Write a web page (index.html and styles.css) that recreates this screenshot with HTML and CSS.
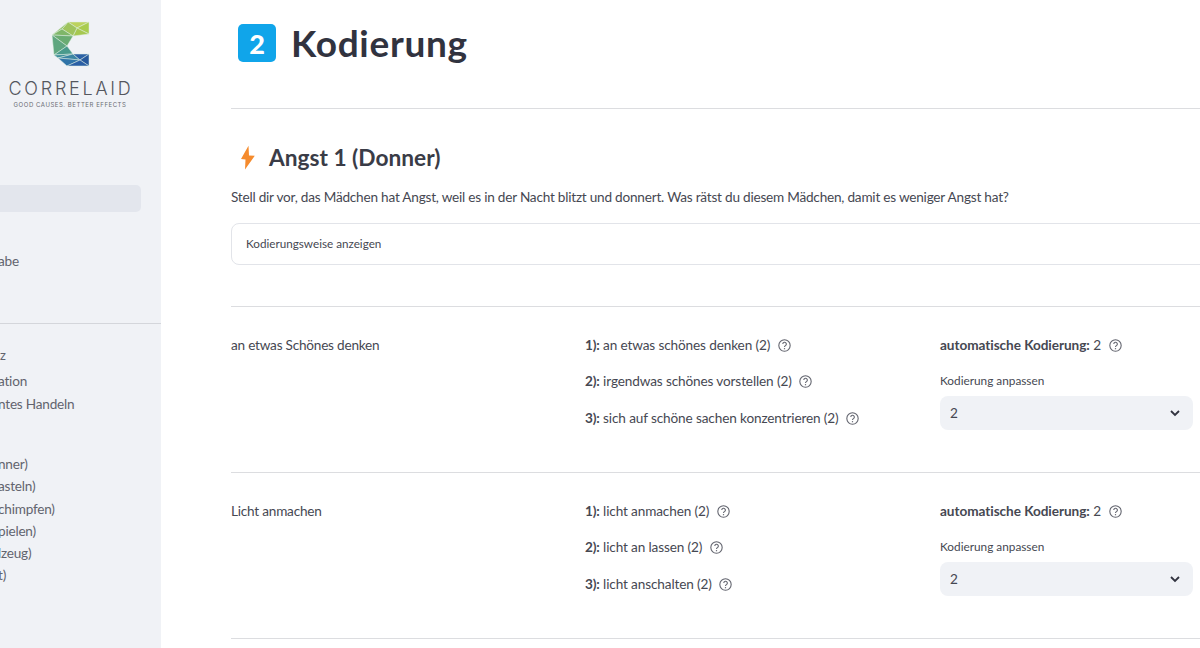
FILE: index.html
```html
<!DOCTYPE html>
<html lang="de">
<head>
<meta charset="utf-8">
<title>Kodierung</title>
<link rel="stylesheet" href="styles.css">
</head>
<body>
<div class="app">
  <aside class="sidebar">
    <div class="brand">
      <svg class="logo" width="40" height="48" viewBox="0 0 40 48">
        <g stroke="#dfeee0" stroke-width=".5" stroke-linejoin="round">
          <polygon points="18,2 39,2 27,8" fill="#bcd25e"/>
          <polygon points="39,2 39,14 27,8" fill="#a9cc4e"/>
          <polygon points="27,8 39,14 23,16" fill="#a6c850"/>
          <polygon points="18,2 27,8 23,16 12,9" fill="#9fc45e"/>
          <polygon points="18,2 12,9 2,15" fill="#8dbd62"/>
          <polygon points="2,15 12,9 23,16" fill="#7fb669"/>
          <polygon points="2,15 23,16 17,26" fill="#6aac72"/>
          <polygon points="2,15 17,26 4,35" fill="#5fa67f"/>
          <polygon points="4,35 17,26 23,34" fill="#4a9a8c"/>
          <polygon points="4,35 23,34 8,38" fill="#3f8f9a"/>
          <polygon points="8,38 23,34 30,40" fill="#3b85a3"/>
          <polygon points="8,38 30,40 17,46" fill="#2f74a8"/>
          <polygon points="23,34 39,34 30,40" fill="#2c62a6"/>
          <polygon points="39,34 39,46 30,40" fill="#25589c"/>
          <polygon points="30,40 39,46 17,46" fill="#2a5fa5"/>
        </g>
      </svg>
      <div class="wordmark">CORRELAID</div>
      <div class="tagline">GOOD CAUSES. BETTER EFFECTS</div>
    </div>
    <div class="nav-active"></div>
    <div class="nav-item nav-abe">abe</div>
    <div class="side-rule"></div>
    <div class="nav-small">z</div>
    <div class="nav-item nav-a">ation</div>
    <div class="nav-item nav-b">ntes Handeln</div>
    <ul class="nav-list">
      <li>nner)</li>
      <li>asteln)</li>
      <li>chimpfen)</li>
      <li>pielen)</li>
      <li>lzeug)</li>
      <li>t)</li>
    </ul>
  </aside>
  <main class="main">
    <header class="title">
      <span class="badge">2</span>
      <h1>Kodierung</h1>
    </header>
    <hr class="rule rule-title">
    <h2 class="section-head">
      <svg class="bolt" width="16" height="26" viewBox="0 0 16 26"><path d="M9.5 .7 L2 14 L6.5 14.5 L6 24.5 L15.8 10.7 L10 10.5 Z" fill="#f58b2d"/></svg>
      Angst 1 (Donner)
    </h2>
    <p class="question">Stell dir vor, das Mädchen hat Angst, weil es in der Nacht blitzt und donnert. Was rätst du diesem Mädchen, damit es weniger Angst hat?</p>
    <div class="expander">Kodierungsweise anzeigen</div>
    <hr class="rule rule-exp">
    <section class="row">
      <div class="answer">an etwas Schönes denken</div>
      <div class="codes">
        <div class="code"><b>1):</b> an etwas schönes denken (2) <svg class="help" width="13" height="13" viewBox="0 0 24 24"><use href="#q"/></svg></div>
        <div class="code"><b>2):</b> irgendwas schönes vorstellen (2) <svg class="help" width="13" height="13" viewBox="0 0 24 24"><use href="#q"/></svg></div>
        <div class="code"><b>3):</b> sich auf schöne sachen konzentrieren (2) <svg class="help" width="13" height="13" viewBox="0 0 24 24"><use href="#q"/></svg></div>
      </div>
      <div class="auto">
        <div class="auto-line"><b>automatische Kodierung:</b> 2 <svg class="help" width="13" height="13" viewBox="0 0 24 24"><use href="#q"/></svg></div>
        <label class="sel-label">Kodierung anpassen</label>
        <div class="select">2<svg width="12" height="12" viewBox="0 0 12 12"><path d="M2 4 L6 8 L10 4" fill="none" stroke="#31333f" stroke-width="1.8"/></svg></div>
      </div>
    </section>
    <hr class="rule">
    <section class="row">
      <div class="answer">Licht anmachen</div>
      <div class="codes">
        <div class="code"><b>1):</b> licht anmachen (2) <svg class="help" width="13" height="13" viewBox="0 0 24 24"><use href="#q"/></svg></div>
        <div class="code"><b>2):</b> licht an lassen (2) <svg class="help" width="13" height="13" viewBox="0 0 24 24"><use href="#q"/></svg></div>
        <div class="code"><b>3):</b> licht anschalten (2) <svg class="help" width="13" height="13" viewBox="0 0 24 24"><use href="#q"/></svg></div>
      </div>
      <div class="auto">
        <div class="auto-line"><b>automatische Kodierung:</b> 2 <svg class="help" width="13" height="13" viewBox="0 0 24 24"><use href="#q"/></svg></div>
        <label class="sel-label">Kodierung anpassen</label>
        <div class="select">2<svg width="12" height="12" viewBox="0 0 12 12"><path d="M2 4 L6 8 L10 4" fill="none" stroke="#31333f" stroke-width="1.8"/></svg></div>
      </div>
    </section>
    <hr class="rule">
  </main>
</div>
<svg class="defs" width="0" height="0">
  <symbol id="q" viewBox="0 0 24 24">
    <circle cx="12" cy="12" r="10.5" fill="none" stroke="#62646e" stroke-width="2"/>
    <path d="M8.8 9.3 a3.3 3.3 0 1 1 4.9 2.9 c-1.1.6-1.7 1.3-1.7 2.6" fill="none" stroke="#62646e" stroke-width="2"/>
    <circle cx="12" cy="17.8" r="1.3" fill="#62646e"/>
  </symbol>
</svg>
</body>
</html>
```
FILE: styles.css
```css
* { box-sizing: border-box; }
html, body { margin: 0; height: 648px; overflow: hidden; background: #fff; }
body { font-family: Lato, "Noto Sans", "Liberation Sans", sans-serif; color: #464852; font-size: 13.6px; letter-spacing: -.22px; }
.app { display: flex; width: 1200px; height: 648px; overflow: hidden; }
.defs { position: absolute; }

.sidebar { width: 161px; flex: none; background: #f0f2f6; display: flex; flex-direction: column; color: #62646e; overflow: hidden; }
.brand { display: flex; flex-direction: column; align-items: center; padding-top: 20px; width: 140px; }
.logo { display: block; }
.wordmark { font-family: Inter, sans-serif; font-weight: 300; font-size: 18px; letter-spacing: 2.75px; line-height: 22px; margin: 10px 0 0 2px; color: #55575e; white-space: nowrap; }
.tagline { font-family: Inter, sans-serif; font-size: 6px; letter-spacing: .55px; line-height: 8px; margin-top: 1px; color: #6a6c73; white-space: nowrap; }
.nav-active { width: 141px; height: 27px; background: #e3e6ed; border-radius: 0 5px 5px 0; margin-top: 76px; flex: none; }
.nav-item { line-height: 20px; white-space: nowrap; text-indent: -2px; }
.nav-abe { margin-top: 39px; }
.side-rule { height: 1px; background: #d4d6db; margin-top: 52px; flex: none; }
.nav-small { font-size: 13px; line-height: 16px; margin-top: 23px; }
.nav-a { margin-top: 8px; }
.nav-b { margin-top: 3px; }
.nav-list { list-style: none; margin: 39px 0 0; padding: 0; }
.nav-list li { line-height: 22.3px; white-space: nowrap; text-indent: -2px; }

.main { flex: 1; min-width: 0; padding-left: 70px; }
.title { display: flex; align-items: center; gap: 15px; height: 86px; padding: 0 0 0 7px; }
.badge { width: 38px; height: 38px; border-radius: 5px; background: #10a5ea; color: #fff; font-size: 27px; font-weight: 900; display: flex; align-items: center; justify-content: center; }
h1 { margin: 0; font-size: 37px; font-weight: 700; color: #31333f; line-height: 44px; letter-spacing: .7px; }
.rule { border: 0; height: 1px; background: #dcdde0; margin: 0; }
.rule-title { margin-top: 22px; }
.section-head { display: flex; align-items: center; gap: 14px; margin: 35px 0 0 8px; font-size: 22.7px; font-weight: 700; line-height: 28px; letter-spacing: 0; color: #3a3c47; }
.question { margin: 14px 0 0; line-height: 22px; white-space: nowrap; }
.expander { margin-top: 15px; height: 42px; width: 1000px; border: 1px solid #e2e4e9; border-radius: 8px; padding: 0 0 2px 14px; display: flex; align-items: center; font-size: 11.7px; letter-spacing: 0; }
.rule-exp { margin-top: 41px; }

.row { display: grid; grid-template-columns: 354px 355px 253px; height: 165px; padding-top: 28px; }
.answer { line-height: 20px; }
.code { line-height: 20px; margin-bottom: 16.4px; white-space: nowrap; letter-spacing: -.13px; }
.auto-line { line-height: 20px; white-space: nowrap; letter-spacing: -.05px; }
.help { vertical-align: -2px; margin-left: 4px; }
.sel-label { display: block; font-size: 11.8px; line-height: 14px; margin-top: 19px; letter-spacing: 0; }
.select { height: 34px; margin-top: 8px; background: #f0f2f6; border-radius: 8px; padding: 0 12px 0 10px; display: flex; align-items: center; justify-content: space-between; }
b { font-weight: 700; }
```
